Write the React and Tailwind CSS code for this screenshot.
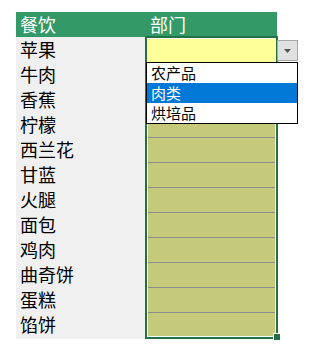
import React from 'react';

const foods = ['苹果', '牛肉', '香蕉', '柠檬', '西兰花', '甘蓝', '火腿', '面包', '鸡肉', '曲奇饼', '蛋糕', '馅饼'];
const options = ['农产品', '肉类', '烘培品'];

const App = () => {
  return (
    <div className="relative w-[319px] h-[354px] bg-white pt-[12px] pl-[16px] font-['Noto_Sans_CJK_SC',sans-serif] text-black">
      {/* Table header */}
      <div className="flex w-[261px] h-[25px] bg-[#339966] text-white text-[18px] leading-[25px]">
        <div className="w-[129px] pl-[4px]">餐饮</div>
        <div className="pl-[5px]">部门</div>
      </div>

      {/* Body */}
      <div className="flex">
        <div className="w-[129px] bg-[#f0f0f0]">
          {foods.map((f) => (
            <div key={f} className="h-[25px] pl-[4px] text-[18px] leading-[25px]">
              {f}
            </div>
          ))}
        </div>

        {/* Selected range */}
        <div className="-mt-[1px] w-[133px] h-[303px] border-2 border-[#217346]">
          <div className="h-full border border-white overflow-hidden bg-[#c5c97a]">
            <div className="h-[23px] bg-[#ffff99]" />
            {foods.slice(1).map((f) => (
              <div key={f} className="h-[25px] border-t border-[#8c8c8c]" />
            ))}
          </div>
        </div>
      </div>

      {/* Fill handle */}
      <div className="absolute left-[273px] top-[333px] w-[8px] h-[8px] bg-[#217346] border border-white" />

      {/* Dropdown button */}
      <div className="absolute left-[277px] top-[40px] w-[21px] h-[21px] bg-[#e1e1e1] border border-[#a6a6a6] flex items-center justify-center">
        <svg width="7" height="4" viewBox="0 0 7 4">
          <path d="M0 0h7L3.5 4z" fill="#555" />
        </svg>
      </div>

      {/* Dropdown list */}
      <div className="absolute left-[146px] top-[62px] w-[152px] h-[62px] bg-white border border-black">
        {options.map((o, i) => (
          <div
            key={o}
            className={`h-[20px] pl-[4px] text-[15px] leading-[20px] ${
              i === 1 ? 'bg-[#0078d7] text-white' : 'text-black'
            }`}
          >
            {o}
          </div>
        ))}
      </div>
    </div>
  );
};

export default App;
